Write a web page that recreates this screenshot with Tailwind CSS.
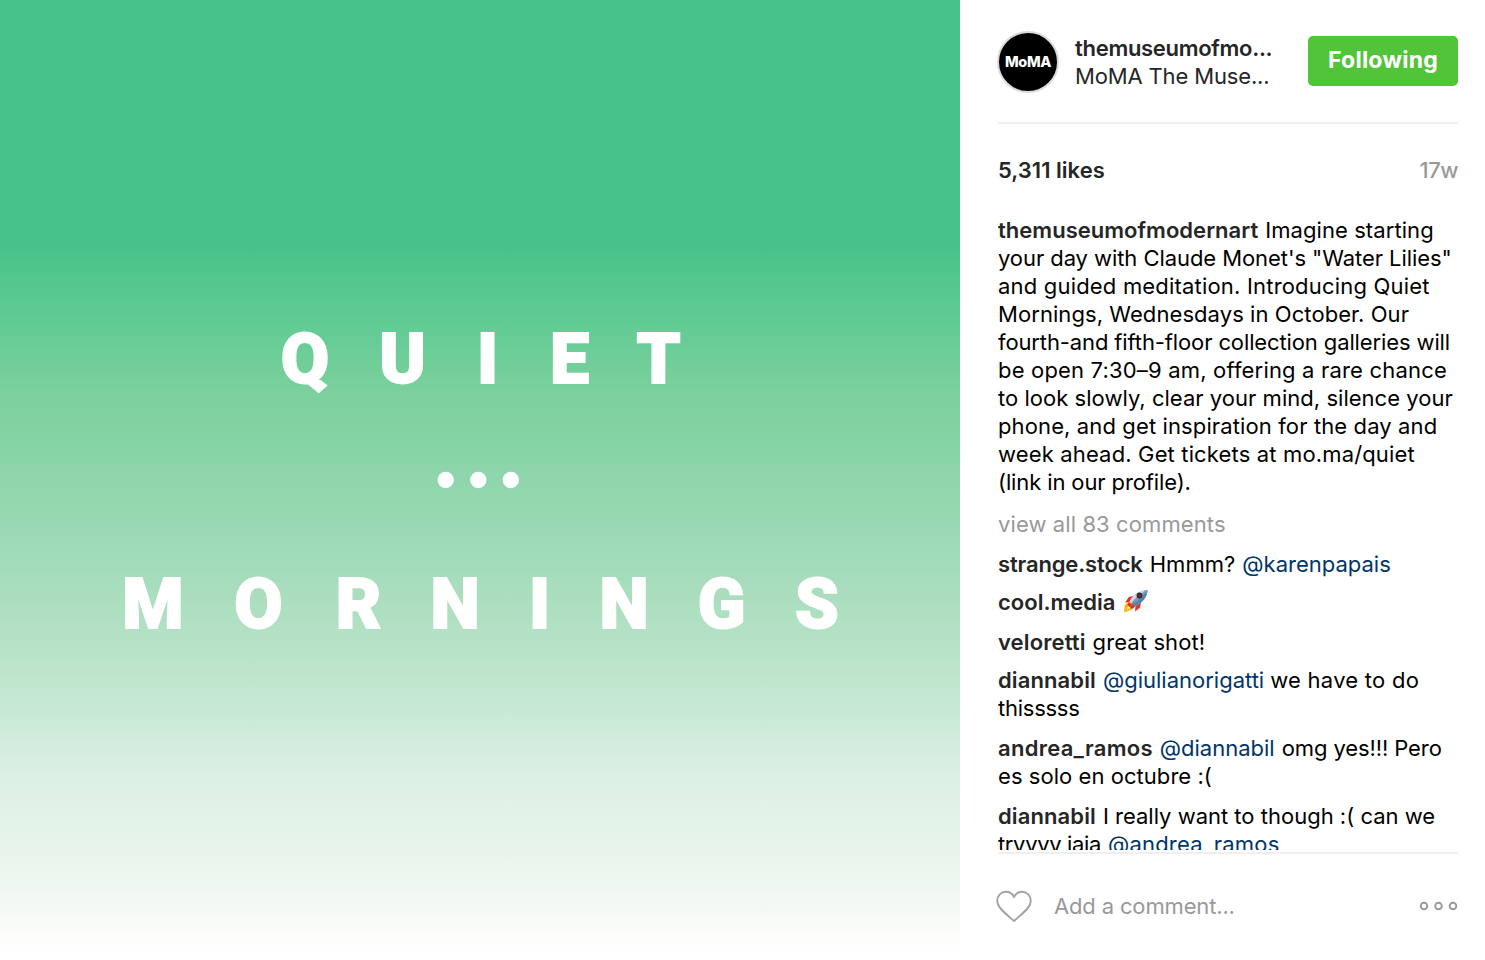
<!DOCTYPE html>
<html lang="en">
<head>
    <meta charset="UTF-8">
    <meta name="viewport" content="width=device-width, initial-scale=1.0">
    <title>MoMA The Museum of Modern Art - Quiet Mornings</title>
    <script src="https://cdn.jsdelivr.net/npm/@tailwindcss/browser@4"></script>
</head>
<body class="bg-white font-['Inter',sans-serif] text-[22px] leading-7 text-black">
    <article class="flex h-[960px] w-[1485px] overflow-hidden bg-white">
        <!-- photo -->
        <div class="h-[960px] w-[960px] shrink-0 bg-[linear-gradient(to_bottom,#47c389_0px,#47c389_248px,#5dca93_310px,#6bcd97_350px,#7bd09d_390px,#83d3a3_433px,#90d6ad_485px,#9edab6_545px,#aedfc1_612px,#c1e6ce_685px,#cfebdb_733px,#ddf0e4_782px,#e9f5ec_855px,#f3f8f4_903px,#fdfdfc_940px,#ffffff_960px)]">
            <svg class="block h-[960px] w-[960px]" viewBox="0 0 960 960" fill="#fff">
                <g font-family="Roboto" font-weight="900" font-size="70" text-anchor="middle" stroke="#fff" stroke-width="1.8">
                    <text y="383" x="305 402.5 487.5 569.5 658.5">QUIET</text>
                    <text y="628" x="153 258.5 358.5 455 539.5 624 721.5 817">MORNINGS</text>
                </g>
                <circle cx="445.7" cy="480" r="8.2"/>
                <circle cx="478.3" cy="480" r="8.2"/>
                <circle cx="510.8" cy="480" r="8.2"/>
            </svg>
        </div>

        <div class="flex flex-1 flex-col pr-[27px] pl-[38px]">
            <!-- header -->
            <header class="flex h-[124px] shrink-0 items-start border-b-2 border-[#efefef] text-[#262626]">
                <div class="mt-[31px] -ml-px flex size-[62px] shrink-0 items-center justify-center rounded-full border-2 border-[#dbdbdb] bg-black">
                    <span class="text-[14.5px] leading-none font-extrabold tracking-[-0.4px] text-white">MoMA</span>
                </div>
                <div class="mt-[34px] ml-4 flex-1 whitespace-nowrap">
                    <div class="font-semibold tracking-[-0.3px]">themuseumofmo...</div>
                    <div class="tracking-[-0.15px]">MoMA The Muse...</div>
                </div>
                <button class="mt-9 h-[50px] w-[150px] rounded-[5px] bg-[#51c43a] pb-[3px] text-center text-[23px] font-bold tracking-[0.25px] text-white">Following</button>
            </header>

            <div class="mt-8 flex shrink-0 justify-between">
                <span class="font-semibold tracking-[0.02px] text-[#262626]">5,311 likes</span>
                <span class="font-medium tracking-[-0.5px] text-[#999]">17w</span>
            </div>

            <!-- comments -->
            <ul class="mt-8 h-[634px] overflow-hidden whitespace-nowrap">
                <li>
                    <span class="block tracking-[0.08px]"><b class="mr-[7px] font-semibold tracking-[0.02px] text-[#262626]">themuseumofmodernart</b>Imagine starting</span>
                    <span class="block tracking-[-0.07px]">your day with Claude Monet's "Water Lilies"</span>
                    <span class="block tracking-[0.19px]">and guided meditation. Introducing Quiet</span>
                    <span class="block tracking-[0.07px]">Mornings, Wednesdays in October. Our</span>
                    <span class="block tracking-[-0.12px]">fourth-and fifth-floor collection galleries will</span>
                    <span class="block tracking-[0.18px]">be open 7:30–9 am, offering a rare chance</span>
                    <span class="block tracking-[0.03px]">to look slowly, clear your mind, silence your</span>
                    <span class="block tracking-[0.12px]">phone, and get inspiration for the day and</span>
                    <span class="block tracking-[0.15px]">week ahead. Get tickets at mo.ma/quiet</span>
                    <span class="block tracking-[-0.12px]">(link in our profile).</span>
                </li>
                <li class="mt-3.5 tracking-[0.1px] text-[#999]">view all 83 comments</li>
                <li class="mt-3"><b class="mr-[7px] font-semibold tracking-[-0.15px] text-[#262626]">strange.stock</b><span class="mr-[7px] tracking-[0.05px]">Hmmm?</span><a class="text-[#003569]">@karenpapais</a></li>
                <li class="mt-2.5 flex h-7">
                    <b class="mr-2 font-semibold tracking-[0.02px] text-[#262626]">cool.media</b>
                    <svg class="mt-px size-6" viewBox="0 0 24 24">
                        <path d="M9 7 5 8 1 13.500l6-.8zM17 13.500l-1 5-5 4 .5-5z" fill="#f02a1c"/>
                        <path d="M4.500 13 .8 16 0 23.500l7-2.500 3.500-4z" fill="#f8b318"/>
                        <path d="M4.500 16 2.500 21l4.500-2.300z" fill="#fff17a"/>
                        <path d="M5.500 13c2-6 8-11 18-12 0 7-5.500 13-13.500 17z" fill="#6e9dbd"/>
                        <path d="M5.500 13c2-6 8-11 18-12C17 4 11 9 7 14.500z" fill="#c9dce8"/>
                        <path d="M8 16C13 13 19 8 23.500 1c0 7-5.500 13-13.500 17z" fill="#4f83b0"/>
                        <path d="m5 13 5.500 5L8 20 3.500 16z" fill="#e3281b"/>
                        <path d="M12.500 11 6.500 18l-2-.5z" fill="#f04b20"/>
                        <circle cx="15.500" cy="6.500" r="2.900" fill="#34262d"/>
                        <circle cx="15.500" cy="6.500" r="1.500" fill="#981f27"/>
                        <path d="M19.500 2 23.500 1 22.500 4.500z" fill="#71a0cf"/>
                    </svg>
                </li>
                <li class="mt-3 tracking-[0.1px]"><b class="mr-[7px] font-semibold tracking-[0.12px] text-[#262626]">veloretti</b>great shot!</li>
                <li class="mt-2.5">
                    <span class="block"><b class="mr-[7px] font-semibold tracking-[0.11px] text-[#262626]">diannabil</b><a class="mr-1.5 text-[#003569]">@giulianorigatti</a><span class="tracking-[0.26px]">we have to do</span></span>
                    <span class="block tracking-[-0.25px]">thisssss</span>
                </li>
                <li class="mt-3">
                    <span class="block"><b class="mr-[7px] font-semibold tracking-[0.28px] text-[#262626]">andrea_ramos</b><a class="mr-[7px] text-[#003569]">@diannabil</a><span class="tracking-[-0.1px]">omg yes!!! Pero</span></span>
                    <span class="block tracking-[0.05px]">es solo en octubre :(</span>
                </li>
                <li class="mt-3">
                    <span class="block"><b class="mr-[7px] font-semibold tracking-[0.11px] text-[#262626]">diannabil</b>I really want to though :( can we</span>
                    <span class="block"><span class="mr-[7px] tracking-[-0.35px]">tryyyy jaja</span><a class="tracking-[0.2px] text-[#003569]">@andrea_ramos</a></span>
                </li>
            </ul>

            <!-- add comment -->
            <footer class="mt-0.5 flex h-[108px] shrink-0 items-center border-t-2 border-[#efefef] pb-0.5 text-[#999]">
                <svg class="-ml-0.5 h-8 w-9" viewBox="0 0 36 32" fill="none" stroke="#a3a3a3" stroke-width="1.9" stroke-linejoin="round">
                    <path d="M18 31C13 26.500 8 22.500 4.500 18.500 2.300 16 1.200 13.500 1.200 10.800 1.200 5.600 5.200 1.700 9.900 1.700 13.500 1.700 16.500 3.600 18 7 19.500 3.600 22.500 1.700 26.100 1.700 30.800 1.700 34.800 5.600 34.800 10.800 34.800 13.500 33.700 16 31.500 18.500 28 22.500 23 26.500 18 31Z"/>
                </svg>
                <span class="ml-[22px] flex-1 tracking-[-0.15px]">Add a comment...</span>
                <svg class="h-3 w-10" viewBox="0 0 40 12" fill="none" stroke="#999" stroke-width="1.900">
                    <circle cx="6" cy="6" r="3.300"/>
                    <circle cx="20.500" cy="6" r="3.300"/>
                    <circle cx="35" cy="6" r="3.300"/>
                </svg>
            </footer>
        </div>
    </article>
</body>
</html>
